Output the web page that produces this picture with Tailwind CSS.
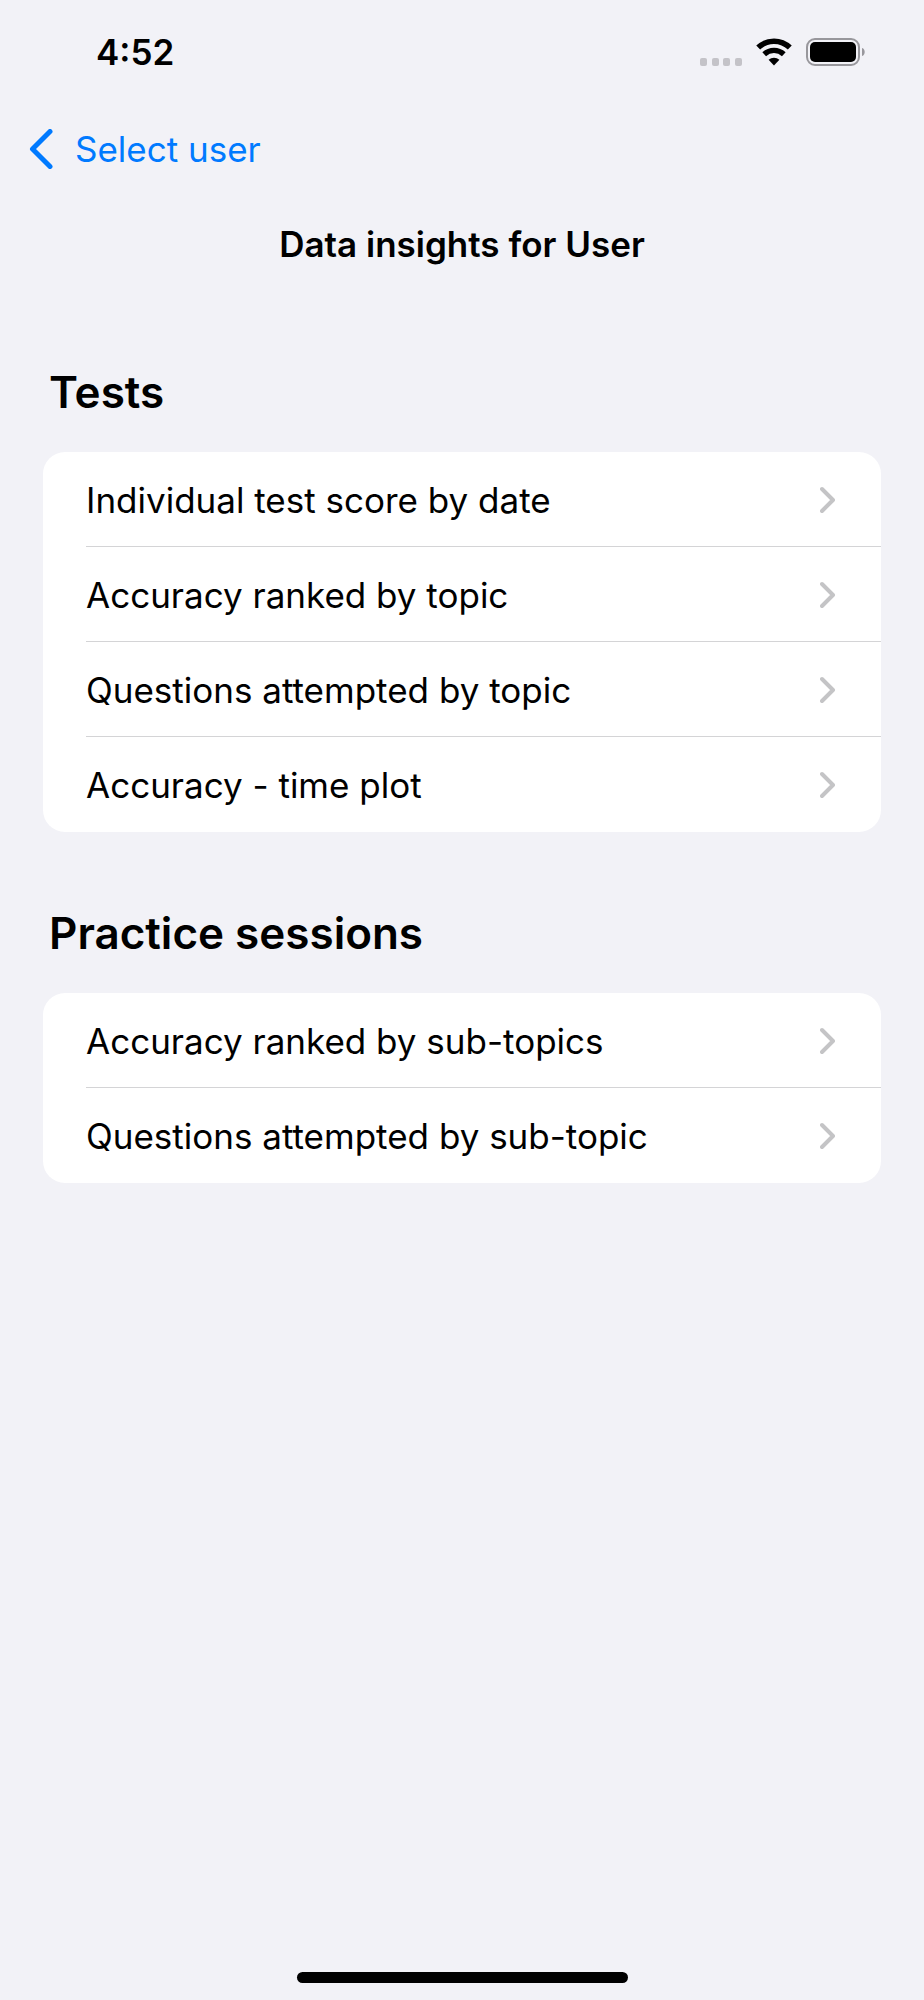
<!DOCTYPE html>
<html lang="en">
  <head>
    <meta charset="UTF-8" />
    <meta name="viewport" content="width=device-width, initial-scale=1.0" />
    <title>Data insights</title>
    <script src="https://cdn.jsdelivr.net/npm/@tailwindcss/browser@4"></script>
  </head>
  <body
    class="bg-[#f2f2f7] min-h-screen flex flex-col font-['Inter','Liberation_Sans',sans-serif] text-[35px] leading-[44px] text-black"
  >
    <!-- Status bar -->
    <div class="h-[104px] pl-24 pr-[59px] flex items-center justify-between">
      <span class="font-semibold">4:52</span>
      <div class="flex items-center gap-[14px]">
        <svg class="w-[42px] h-7" viewBox="0 0 42 28" fill="#c4c3c8">
          <rect x="0" y="20" width="7" height="8" rx="2" />
          <rect x="12" y="20" width="7" height="8" rx="2" />
          <rect x="23" y="20" width="7" height="8" rx="2" />
          <rect x="35" y="20" width="7" height="8" rx="2" />
        </svg>
        <svg class="w-9 h-7" viewBox="0 0 36 28">
          <path d="M2.2 9.6a22.8 22.8 0 0 1 31.6 0" fill="none" stroke="#000" stroke-width="5.6" />
          <path d="M8.2 16.2a14.4 14.4 0 0 1 19.6 0" fill="none" stroke="#000" stroke-width="5.4" />
          <path d="M12.6 21.8a8.3 8.3 0 0 1 10.8 0L18 27.4z" fill="#000" />
        </svg>
        <svg class="w-[59px] h-7" viewBox="0 0 59 28">
          <rect x="1" y="1" width="52" height="26" rx="8" fill="none" stroke="#98979c" stroke-width="2" />
          <rect x="4" y="4" width="46" height="20" rx="5" fill="#000" />
          <path d="M56 10v8c3.600-1 3.600-7 0-8z" fill="#98979c" />
        </svg>
      </div>
    </div>

    <!-- Navigation -->
    <nav class="h-[90px] px-[29px] flex items-center">
      <a href="#" class="flex items-center gap-[22px] text-[#007aff]">
        <svg class="w-6 h-10" viewBox="0 0 24 40" fill="none" stroke="currentColor" stroke-width="5" stroke-linecap="round" stroke-linejoin="round">
          <path d="M21 2.500L3.500 20 21 37.500" />
        </svg>
        Select user
      </a>
    </nav>

    <main class="grow px-[43px]">
      <h1 class="pt-7 text-center font-semibold">Data insights for User</h1>

      <!-- Tests -->
      <section class="pt-24">
        <h2 class="px-1.5 text-[44px] leading-[60px] font-semibold">Tests</h2>
        <ul class="mt-[30px] bg-white rounded-[22px] overflow-hidden">
          <li class="pl-[43px]">
            <a href="#" class="h-[95px] pt-px pr-[45px] flex items-center justify-between border-b border-[#d4d4d6]">
              Individual test score by date
              <svg class="w-4 h-7" viewBox="0 0 16 28" fill="none" stroke="#c4c4c6" stroke-width="4" stroke-linecap="round" stroke-linejoin="round">
                <path d="M2 3l11 11L2 25" />
              </svg>
            </a>
          </li>
          <li class="pl-[43px]">
            <a href="#" class="h-[95px] pt-px pr-[45px] flex items-center justify-between border-b border-[#d4d4d6]">
              Accuracy ranked by topic
              <svg class="w-4 h-7" viewBox="0 0 16 28" fill="none" stroke="#c4c4c6" stroke-width="4" stroke-linecap="round" stroke-linejoin="round">
                <path d="M2 3l11 11L2 25" />
              </svg>
            </a>
          </li>
          <li class="pl-[43px]">
            <a href="#" class="h-[95px] pt-px pr-[45px] flex items-center justify-between border-b border-[#d4d4d6]">
              Questions attempted by topic
              <svg class="w-4 h-7" viewBox="0 0 16 28" fill="none" stroke="#c4c4c6" stroke-width="4" stroke-linecap="round" stroke-linejoin="round">
                <path d="M2 3l11 11L2 25" />
              </svg>
            </a>
          </li>
          <li class="pl-[43px]">
            <a href="#" class="h-[95px] pt-px pr-[45px] flex items-center justify-between">
              Accuracy - time plot
              <svg class="w-4 h-7" viewBox="0 0 16 28" fill="none" stroke="#c4c4c6" stroke-width="4" stroke-linecap="round" stroke-linejoin="round">
                <path d="M2 3l11 11L2 25" />
              </svg>
            </a>
          </li>
        </ul>
      </section>

      <!-- Practice sessions -->
      <section class="pt-[71px]">
        <h2 class="px-1.5 text-[44px] leading-[60px] font-semibold">Practice sessions</h2>
        <ul class="mt-[30px] bg-white rounded-[22px] overflow-hidden">
          <li class="pl-[43px]">
            <a href="#" class="h-[95px] pt-px pr-[45px] flex items-center justify-between border-b border-[#d4d4d6]">
              Accuracy ranked by sub-topics
              <svg class="w-4 h-7" viewBox="0 0 16 28" fill="none" stroke="#c4c4c6" stroke-width="4" stroke-linecap="round" stroke-linejoin="round">
                <path d="M2 3l11 11L2 25" />
              </svg>
            </a>
          </li>
          <li class="pl-[43px]">
            <a href="#" class="h-[95px] pt-px pr-[45px] flex items-center justify-between">
              Questions attempted by sub-topic
              <svg class="w-4 h-7" viewBox="0 0 16 28" fill="none" stroke="#c4c4c6" stroke-width="4" stroke-linecap="round" stroke-linejoin="round">
                <path d="M2 3l11 11L2 25" />
              </svg>
            </a>
          </li>
        </ul>
      </section>
    </main>

    <!-- Home indicator -->
    <div class="pb-[17px] flex justify-center">
      <div class="w-[331px] h-[11px] rounded-full bg-black"></div>
    </div>
  </body>
</html>
